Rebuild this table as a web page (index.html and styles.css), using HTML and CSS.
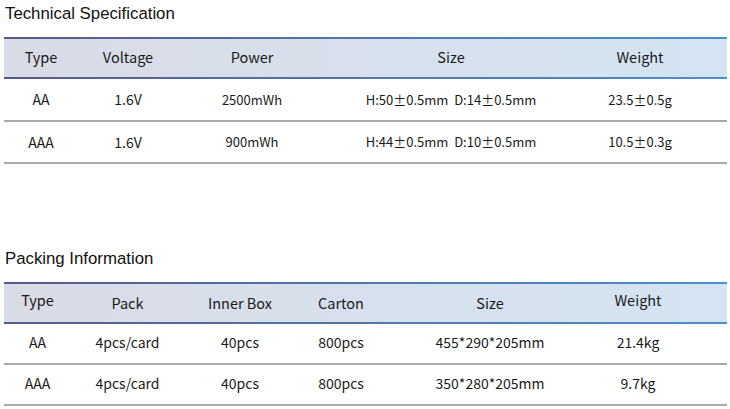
FILE: index.html
```html
<!DOCTYPE html>
<html>
<head>
<meta charset="utf-8">
<link rel="stylesheet" href="styles.css">
</head>
<body>
<section class="block spec">
  <h2 class="title">Technical Specification</h2>
  <div class="table">
    <div class="row head">
      <div>Type</div><div>Voltage</div><div>Power</div><div>Size</div><div>Weight</div>
    </div>
    <div class="row">
      <div>AA</div><div>1.6V</div><div class="sm">2500mWh</div><div class="sm">H:50±0.5mm&nbsp; D:14±0.5mm</div><div class="sm">23.5±0.5g</div>
    </div>
    <div class="row">
      <div>AAA</div><div>1.6V</div><div class="sm">900mWh</div><div class="sm">H:44±0.5mm&nbsp; D:10±0.5mm</div><div class="sm">10.5±0.3g</div>
    </div>
  </div>
</section>
<section class="block pack">
  <h2 class="title">Packing Information</h2>
  <div class="table">
    <div class="row head">
      <div class="up">Type</div><div>Pack</div><div>Inner Box</div><div>Carton</div><div>Size</div><div class="up">Weight</div>
    </div>
    <div class="row">
      <div>AA</div><div>4pcs/card</div><div>40pcs</div><div>800pcs</div><div>455*290*205mm</div><div>21.4kg</div>
    </div>
    <div class="row">
      <div>AAA</div><div>4pcs/card</div><div>40pcs</div><div>800pcs</div><div>350*280*205mm</div><div>9.7kg</div>
    </div>
  </div>
</section>
</body>
</html>
```
FILE: styles.css
```css
html, body {
  margin: 0;
  padding: 0;
  background: #ffffff;
}
body {
  width: 730px;
  height: 409px;
  overflow: hidden;
  font-family: "Noto Sans CJK SC", "Noto Sans", sans-serif;
  color: #1a1a1a;
}
.block {
  padding-left: 4px;
  width: 723px;
}
.spec {
  padding-top: 4px;
}
.pack {
  margin-top: 85px;
}
.title {
  margin: 0 0 0 1px;
  font-family: "Liberation Sans", Arial, sans-serif;
  font-weight: normal;
  font-size: 16.8px;
  line-height: 20px;
  color: #111;
}
.table {
  margin-top: 13px;
}
.row {
  display: grid;
  align-items: center;
  text-align: center;
  border-bottom: 2px solid #a9a9a9;
  font-size: 14px;
  height: 40.5px;
}
.row.head {
  border-style: solid;
  border-width: 2px 0;
  border-image: linear-gradient(90deg, #565a8a 0%, #4f7cb4 60%, #4a90cf 100%) 1;
  background: linear-gradient(90deg, #d9dbe6 0%, #d7e1ee 60%, #d4e4f2 100%);
  font-size: 14.5px;
  height: 38px;
}
.spec .row.head > div {
  margin-top: -3px;
}
.spec .row {
  grid-template-columns: 74px 100px 148px 250px 151px;
}
.spec .row > div:last-child {
  padding-right: 23px;
}
.spec .row .sm {
  font-size: 13px;
}
.pack .row {
  grid-template-columns: 67px 113px 112px 90px 208px 133px;
  height: 39px;
}
.pack .row > div {
  margin-top: -3px;
}
.pack .row.head {
  height: 38px;
}
.pack .row > div:last-child {
  padding-right: 45px;
}
.pack .row.head > div {
  margin-top: -2px;
}
.pack .row.head > .up {
  margin-top: -7px;
}
```
